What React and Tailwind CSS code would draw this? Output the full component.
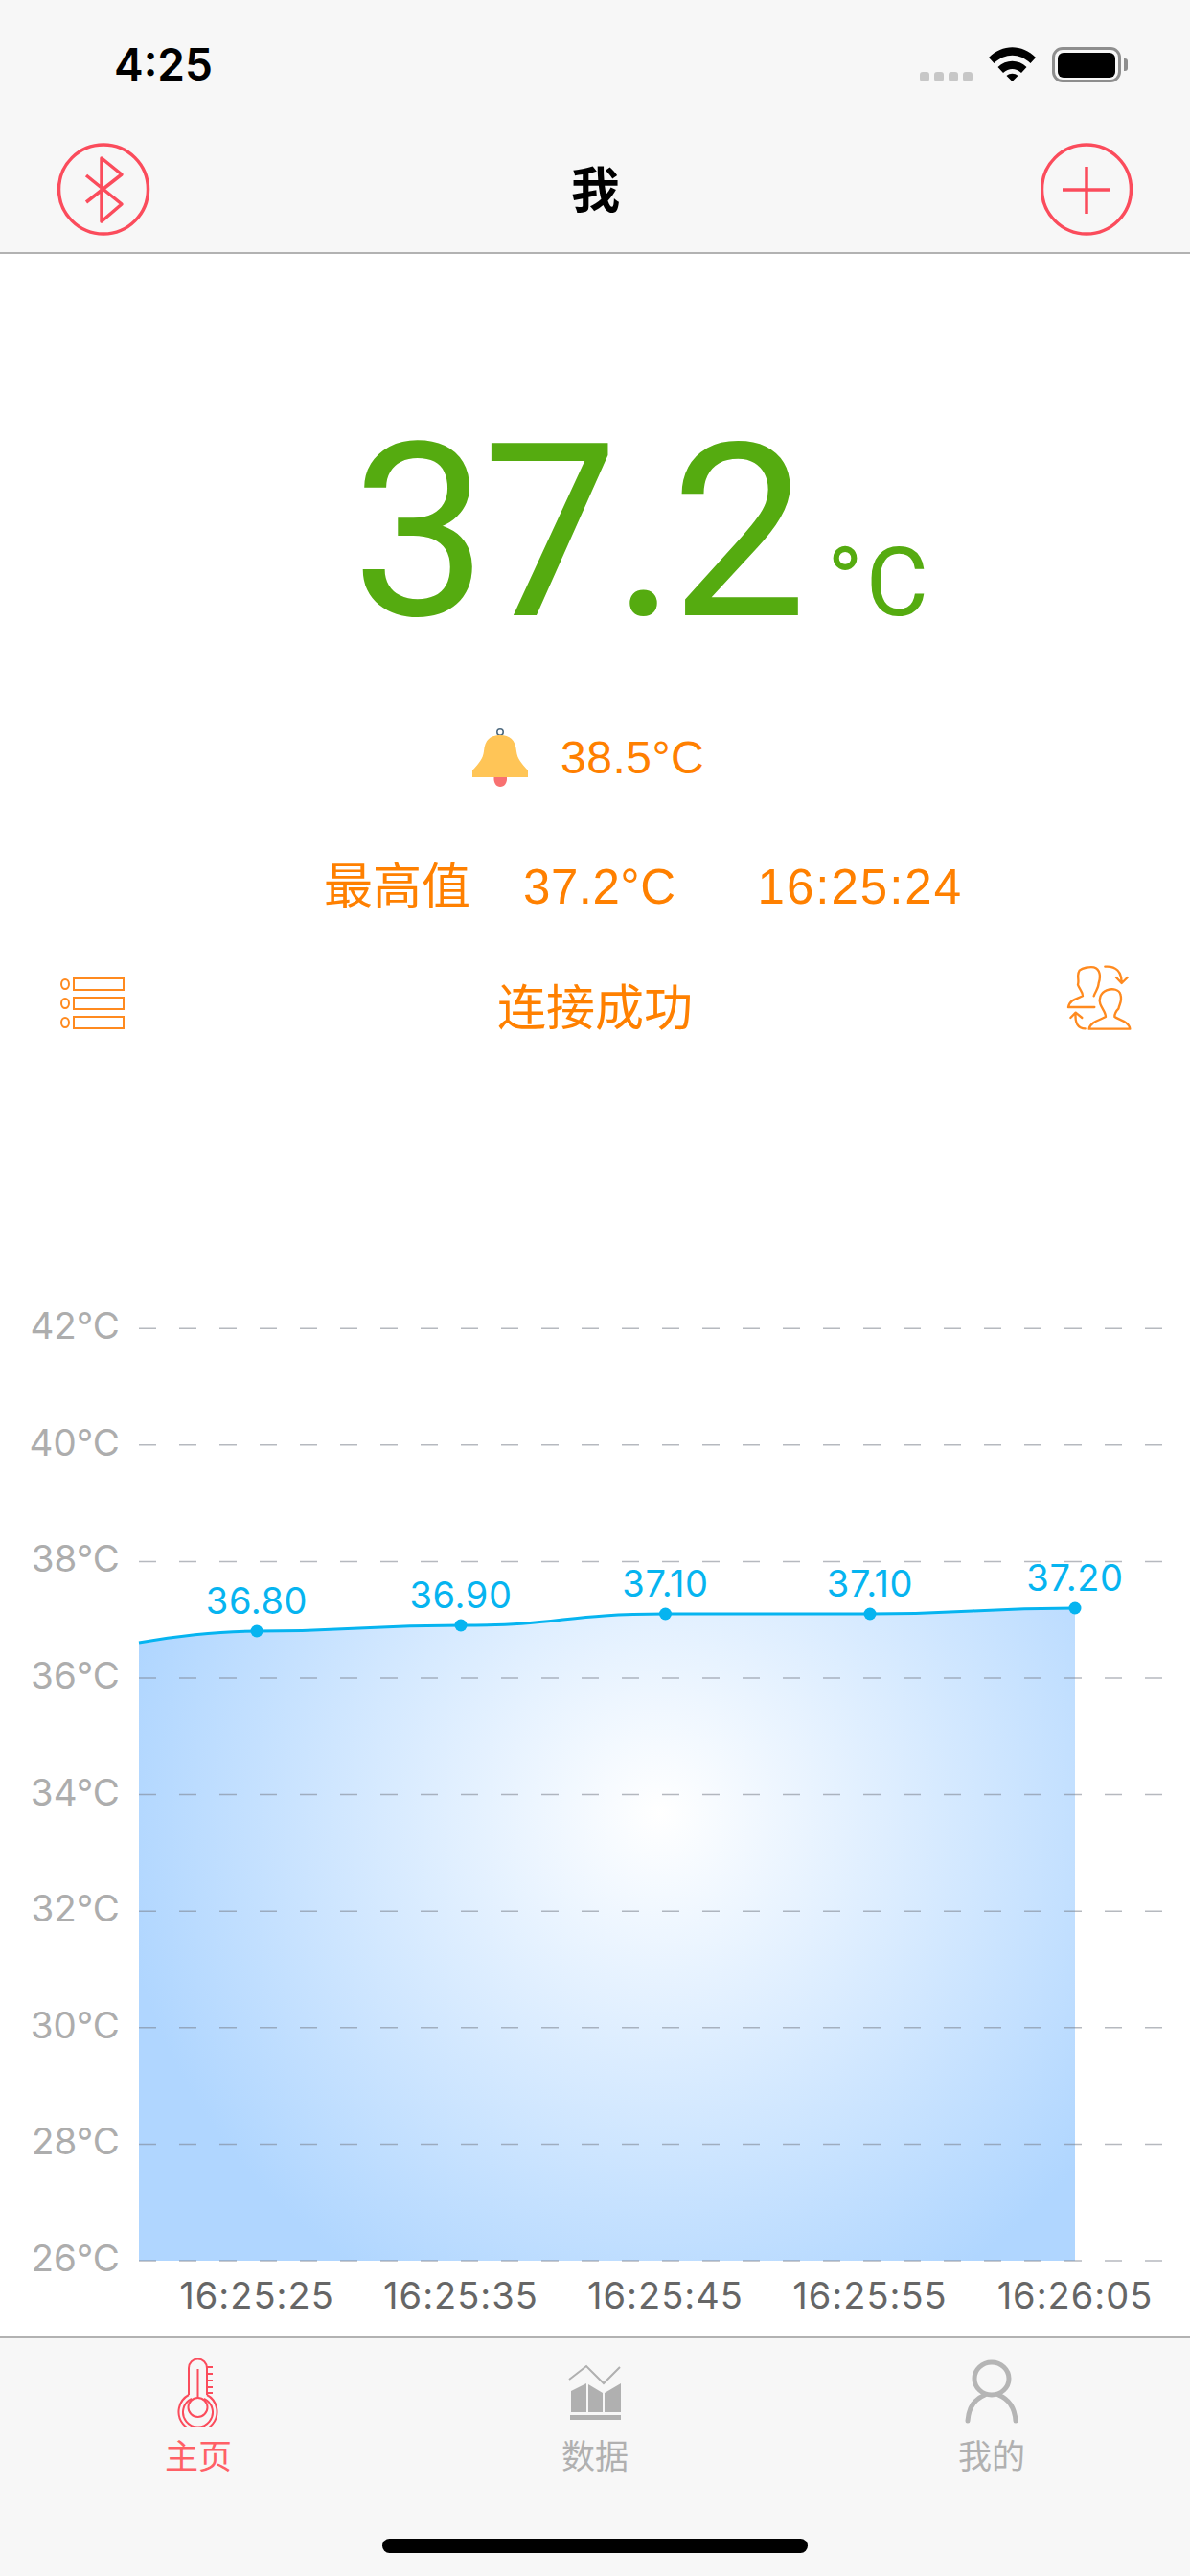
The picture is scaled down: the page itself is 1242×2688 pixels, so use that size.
import React from 'react';

const ORANGE_ICON = '#ff8a1f';
const RED = '#fb4c5c';
const GRID_TICKS = [42, 40, 38, 36, 34, 32, 30, 28, 26];
const POINTS = [
  { x: 268, y: 1702, label: '36.80', time: '16:25:25' },
  { x: 481, y: 1696, label: '36.90', time: '16:25:35' },
  { x: 694.5, y: 1684, label: '37.10', time: '16:25:45' },
  { x: 908, y: 1684, label: '37.10', time: '16:25:55' },
  { x: 1122, y: 1678, label: '37.20', time: '16:26:05' },
];

const linePath =
  'M145 1714 C185 1707 225 1702 268 1702 C374.5 1702 374.5 1696 481 1696 C587.5 1696 587.5 1684 694.5 1684 C801 1684 801 1684 908 1684 C1015 1684 1015 1678 1122 1678';

const gridY = (tick) => 2359 - (tick - 26) * 60.8;

const StatusBar = () => (
  <div className="flex h-[132px] items-start justify-between">
    <span className="ml-[119px] mt-[39px] font-['Inter',sans-serif] text-[46px] leading-[56px] font-semibold text-black">4:25</span>
    <div className="mr-[65px] mt-[49px] flex items-start">
      <div className="mt-[26px] flex gap-[5px]">
        <div className="h-[10px] w-[10px] rounded-[3px] bg-[#c7c7c7]" />
        <div className="h-[10px] w-[10px] rounded-[3px] bg-[#c7c7c7]" />
        <div className="h-[10px] w-[10px] rounded-[3px] bg-[#c7c7c7]" />
        <div className="h-[10px] w-[10px] rounded-[3px] bg-[#c7c7c7]" />
      </div>
      <svg className="ml-[17px] h-[36px] w-[49px]" viewBox="0 0 49 36">
        <path d="M0 11 C14 -3.500 35 -3.500 49 11 L43.500 17 C32 6 17 6 5.500 17 Z" fill="#000" />
        <path d="M9.500 21 C18 12.500 31 12.500 39.500 21 L34 27 C28 21.500 21 21.500 15 27 Z" fill="#000" />
        <path d="M18.500 30 C22 27 27 27 30.500 30 L24.500 36 Z" fill="#000" />
      </svg>
      <div className="ml-[17px] flex h-[37px] w-[72px] items-center justify-center rounded-[11px] border-[3px] border-[#8e8e8e]">
        <div className="h-[26px] w-[60px] rounded-[6px] bg-black" />
      </div>
      <div className="ml-[3px] mt-[12px] h-[13px] w-[4px] rounded-r-[3px] bg-[#8e8e8e]" />
    </div>
  </div>
);

const NavBar = () => (
  <div className="flex h-[133px] items-start justify-between border-b-2 border-[#b2b2b2] pl-[60px] pr-[59px] pt-[17px]">
    <svg className="h-[97px] w-[97px]" viewBox="60 149 97 97" fill="none" stroke={RED} strokeWidth="3.500">
      <circle cx="108" cy="197.500" r="46.500" />
      <path d="M90 183 L127 213 L106 231 V165 L127 182 L90 211" strokeLinejoin="round" />
    </svg>
    <span className="mt-[14px] font-['Noto_Sans_CJK_SC',sans-serif] text-[51px] leading-[64px] font-bold text-black">我</span>
    <svg className="h-[97px] w-[97px]" viewBox="1086 149 97 97" fill="none" stroke={RED} strokeWidth="3.500">
      <circle cx="1134" cy="197.500" r="46.500" />
      <path d="M1109 198 H1159 M1134 174 V223" />
    </svg>
  </div>
);

const Bell = () => (
  <svg className="h-[62px] w-[60px]" viewBox="492 758 60 62">
    <circle cx="522" cy="762" r="3.200" fill="none" stroke="#4f6b80" strokeWidth="1.600" />
    <path d="M515.500 809 H529 C529.500 815 526.500 819 522 819 C518 819 515 815 515.500 809 Z" fill="#f87171" />
    <path d="M493 809 V802 C500 794 504 790 505 782 C506 770 512 765 522 765 C532 765 538 770 539 782 C540 790 544 794 551 802 V809 Z" fill="#ffc557" />
  </svg>
);

const ListIcon = () => (
  <svg className="-mt-[2px] h-[55px] w-[68px]" viewBox="62 1019 68 55" fill="none" stroke={ORANGE_ICON} strokeWidth="2">
    <ellipse cx="68" cy="1027" rx="4" ry="5" />
    <ellipse cx="68" cy="1047" rx="4" ry="5" />
    <ellipse cx="68" cy="1067" rx="4" ry="5" />
    <rect x="77" y="1021" width="52" height="12" />
    <rect x="77" y="1041" width="52" height="12" />
    <rect x="77" y="1061" width="52" height="12" />
  </svg>
);

const SwitchUserIcon = () => (
  <svg className="-mt-[15px] h-[70px] w-[70px]" viewBox="96 50 210 210" fill="none" stroke={ORANGE_ICON} strokeWidth="7" strokeLinecap="round" strokeLinejoin="round">
    <path d="M185 150 C190 135 200 125 200 110 C207 90 205 65 185 60 C170 58 150 62 140 70 C130 85 140 100 135 115 C140 130 150 135 150 150 C135 158 110 160 105 185 H187" />
    <path d="M170 253 C175 230 205 225 222 215 C222 200 210 190 205 175 C200 160 205 140 225 132 C245 125 265 130 268 145 C275 165 265 175 262 190 C252 200 250 210 250 215 C265 225 295 230 298 253 Z" />
    <path d="M220 58 C255 55 272 75 272 108 M255 92 L272 110 L290 92" />
    <path d="M158 252 C135 252 125 235 128 202 M112 218 L128 202 L148 218" />
  </svg>
);

const TempChart = () => (
  <svg className="mt-auto block h-[1088px] w-[1242px] font-['Inter',sans-serif]" viewBox="0 1350 1242 1088">
    <defs>
      <radialGradient id="areaFill" gradientUnits="userSpaceOnUse" cx="689" cy="1892" r="570">
        <stop offset="0" stopColor="#ffffff" />
        <stop offset="1" stopColor="#b0d6ff" />
      </radialGradient>
    </defs>
    <path d={`${linePath} V2359 H145 Z`} fill="url(#areaFill)" />
    {GRID_TICKS.map((tick) => (
      <g key={tick}>
        <line x1="145" x2="1213" y1={gridY(tick)} y2={gridY(tick)} stroke="#7a7f8a" strokeOpacity="0.55" strokeWidth="1.500" strokeDasharray="18 24" />
        <text x="125" y={gridY(tick) + 11} textAnchor="end" fontSize="38.500" fill="#adadad">{tick}°C</text>
      </g>
    ))}
    <path d={linePath} fill="none" stroke="#06b4f0" strokeWidth="3" />
    {POINTS.map((p) => (
      <g key={p.time}>
        <circle cx={p.x} cy={p.y} r="6.500" fill="#06b4f0" />
        <text x={p.x} y={p.y - 18} textAnchor="middle" fontSize="38" letterSpacing="0.6" fill="#06b4f0">{p.label}</text>
        <text x={p.x} y="2409" textAnchor="middle" fontSize="38" letterSpacing="1" fill="#666666">{p.time}</text>
      </g>
    ))}
  </svg>
);

const TabBar = () => (
  <div className="flex h-[250px] flex-col border-t-2 border-[#b2b2b2] bg-[#f7f7f7]">
    <div className="grid grid-cols-3 pt-[20px] font-['Noto_Sans_CJK_SC',sans-serif] text-[35px] leading-[36px] text-[#b0b0b0]">
      <div className="flex flex-col items-center">
        <svg className="h-[72px] w-[60px]" viewBox="177 2460 60 72" fill="none" stroke={RED} strokeWidth="2">
          <path d="M197 2499 V2471 a9.500 9.500 0 0 1 19 0 V2499" />
          <path d="M197 2499 A20 20 0 1 0 216 2499" />
          <path d="M200 2503 A15.500 15.500 0 1 0 213 2503" />
          <circle cx="206.500" cy="2512" r="10" />
          <path d="M206.500 2472 V2502 M216 2470 H222 M216 2477 H222 M216 2484 H222 M216 2491 H222 M216 2497 H222" />
        </svg>
        <span className="mt-[11px] text-[#ff6066]">主页</span>
      </div>
      <div className="flex flex-col items-center">
        <svg className="h-[72px] w-[60px]" viewBox="591 2460 60 72" fill="#b0b0b0">
          <path d="M594 2483 L612 2469 L630 2487 L647 2470" fill="none" stroke="#b0b0b0" strokeWidth="2" />
          <path d="M596 2495 L612 2487 V2517 H596 Z" />
          <path d="M614 2488 L629 2497 V2517 H614 Z" />
          <path d="M631 2497 L648 2487 V2517 H631 Z" />
          <rect x="595" y="2520" width="53" height="5" />
        </svg>
        <span className="mt-[11px]">数据</span>
      </div>
      <div className="flex flex-col items-center">
        <svg className="h-[72px] w-[60px]" viewBox="1005 2460 60 72" fill="none" stroke="#b5b5b5" strokeWidth="5" strokeLinecap="round">
          <ellipse cx="1035" cy="2482" rx="18" ry="17" />
          <path d="M1010 2526 C1011 2512 1018 2503 1028 2499 M1060 2526 C1059 2512 1052 2503 1042 2499" />
        </svg>
        <span className="mt-[11px]">我的</span>
      </div>
    </div>
    <div className="mb-[24px] mt-auto h-[15px] w-[444px] self-center rounded-full bg-black" />
  </div>
);

export default function App() {
  return (
    <div className="flex h-[2688px] w-[1242px] flex-col overflow-hidden bg-white font-['Liberation_Sans','Noto_Sans_CJK_SC',sans-serif]">
      <div className="bg-[#f7f7f7]">
        <StatusBar />
        <NavBar />
      </div>
      <div className="flex flex-1 flex-col text-[#ff8000]">
        <div className="flex items-baseline pl-[367px] pt-[151px] font-['Roboto',sans-serif] text-[#55ab10]">
          <span className="text-[253px] leading-[280px] tracking-[-6px]">37.2</span>
          <span className="ml-[27px] text-[100px] leading-[100px] tracking-[3px]">°C</span>
        </div>
        <div className="mt-[64px] flex items-center pl-[492px]">
          <Bell />
          <span className="ml-[33px] text-[48px] leading-[60px] tracking-[0.5px]">38.5°C</span>
        </div>
        <div className="mt-[74px] flex items-center pl-[338px] text-[51px] leading-[60px]">
          <span>最高值</span>
          <span className="ml-[55px] tracking-[0.5px]">37.2°C</span>
          <span className="ml-[85px] tracking-[2px]">16:25:24</span>
        </div>
        <div className="mt-[65px] flex items-start justify-between pl-[62px] pr-[60px]">
          <ListIcon />
          <span className="text-[51px] leading-[64px]">连接成功</span>
          <SwitchUserIcon />
        </div>
        <TempChart />
      </div>
      <TabBar />
    </div>
  );
}
